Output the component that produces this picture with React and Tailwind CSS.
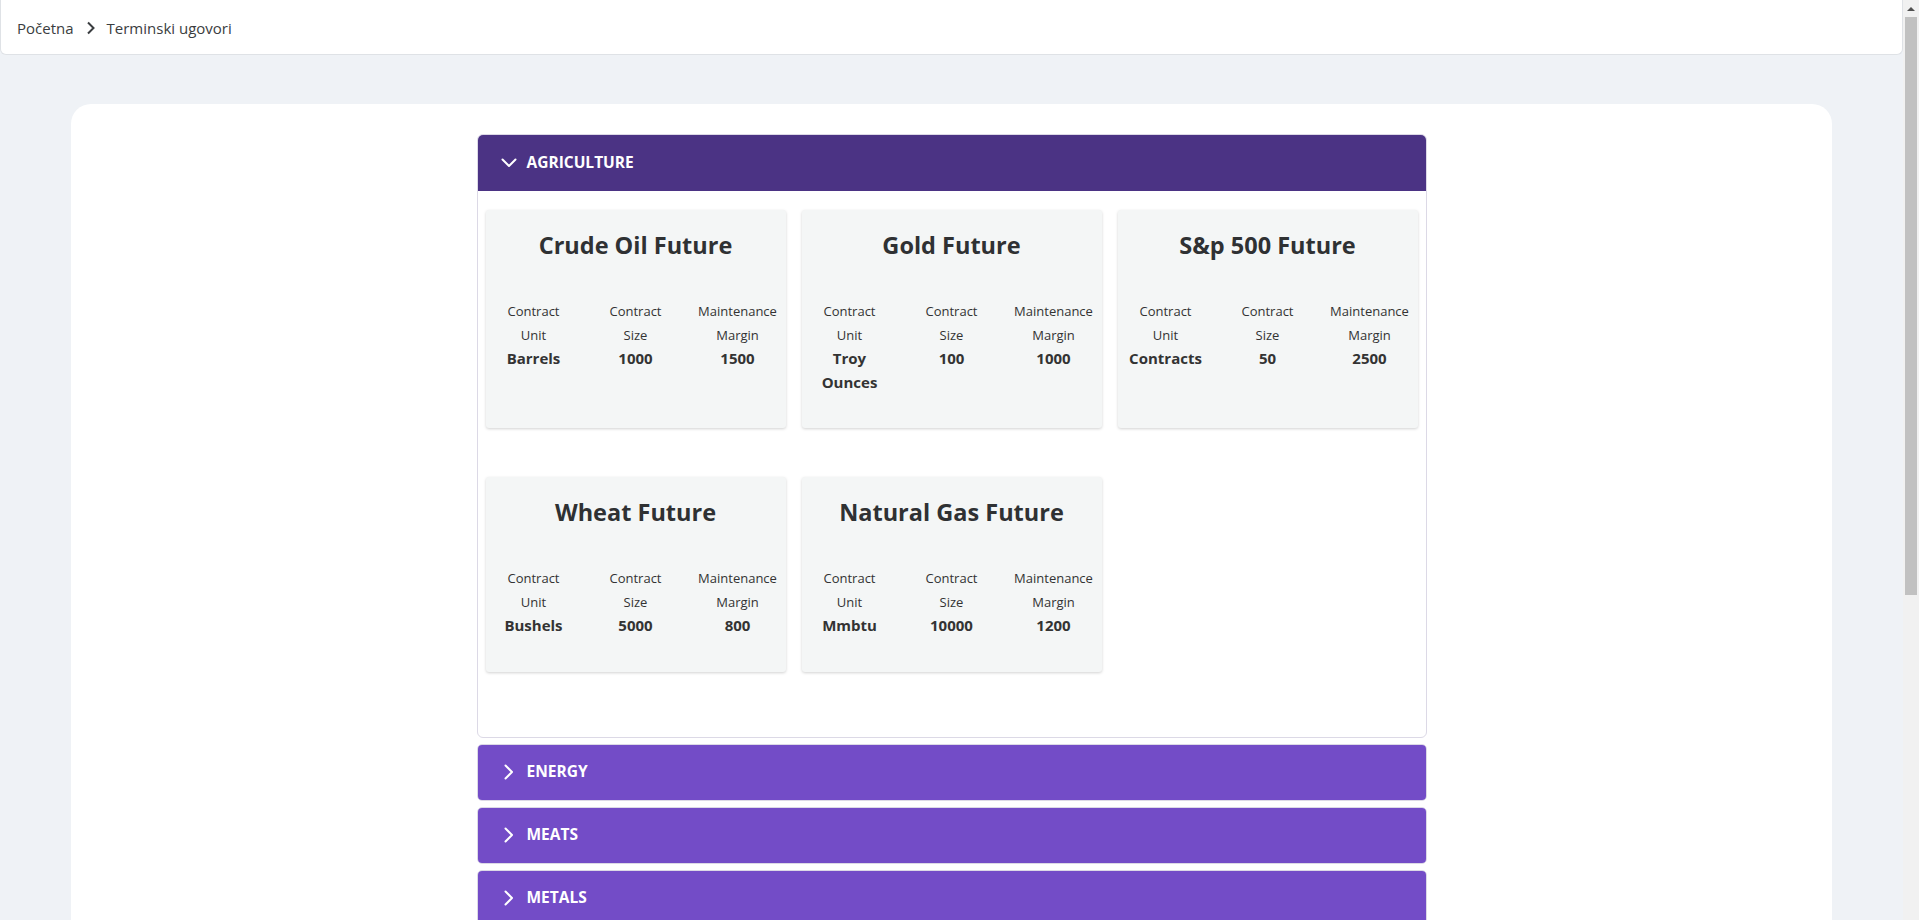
import React, { useState } from "react";

const groups = [
  {
    name: "Agriculture",
    contracts: [
      { title: "Crude Oil Future", unit: "Barrels", size: 1000, margin: 1500 },
      { title: "Gold Future", unit: "Troy Ounces", size: 100, margin: 1000 },
      { title: "S&p 500 Future", unit: "Contracts", size: 50, margin: 2500 },
      { title: "Wheat Future", unit: "Bushels", size: 5000, margin: 800 },
      { title: "Natural Gas Future", unit: "Mmbtu", size: 10000, margin: 1200 },
    ],
  },
  { name: "Energy", contracts: [] },
  { name: "Meats", contracts: [] },
  { name: "Metals", contracts: [] },
];

const Chevron = ({ open }) => (
  <svg
    width="16"
    height="16"
    viewBox="0 0 16 16"
    fill="none"
    stroke="currentColor"
    strokeWidth="2"
    strokeLinecap="round"
    strokeLinejoin="round"
    className={open ? "" : "-rotate-90"}
  >
    <path d="M1.5 4.5 L8 11 L14.5 4.5" />
  </svg>
);

const ContractCard = ({ c }) => (
  <div className="w-[300px] bg-[#f4f6f6] rounded-[3px] shadow-[0_1px_3px_rgba(0,0,0,0.18)] pt-[21px] pb-[34px] text-[#333]">
    <h2 className="text-center text-[23.5px] leading-[29px] font-bold text-[#2f3133]">
      {c.title}
    </h2>
    <div className="mt-[40px] grid grid-cols-[102px_102px_102px] justify-center text-center">
      <div>
        <div className="text-[13px] leading-[23.5px]">Contract</div>
        <div className="text-[13px] leading-[23.5px]">Unit</div>
        <div className="text-[15px] leading-[23.5px] font-bold px-3">{c.unit}</div>
      </div>
      <div>
        <div className="text-[13px] leading-[23.5px]">Contract</div>
        <div className="text-[13px] leading-[23.5px]">Size</div>
        <div className="text-[15px] leading-[23.5px] font-bold">{c.size}</div>
      </div>
      <div>
        <div className="text-[13px] leading-[23.5px]">Maintenance</div>
        <div className="text-[13px] leading-[23.5px]">Margin</div>
        <div className="text-[15px] leading-[23.5px] font-bold">{c.margin}</div>
      </div>
    </div>
  </div>
);

export default function App() {
  const [open, setOpen] = useState("Agriculture");

  return (
    <div className="flex bg-[#eff2f6] font-['Open_Sans','Noto_Sans',sans-serif]">
      <div className="flex-1 min-h-screen pb-[40px]">
        {/* Breadcrumb */}
        <div className="h-[55px] bg-white border-x border-b border-[#dfe2e6] rounded-b-md flex items-center pt-[2px] pl-[16px] text-[15px] text-[#3a3d40]">
          <span>Početna</span>
          <svg
            width="10"
            height="14"
            viewBox="0 0 10 14"
            fill="none"
            stroke="currentColor"
            strokeWidth="2"
            className="ml-[12px] mr-[11px]"
          >
            <path d="M2 1.5 L7.5 7 L2 12.5" />
          </svg>
          <span>Terminski ugovori</span>
        </div>

        <div className="px-[71px] pt-[49px]">
          <div className="bg-white rounded-[20px] pt-[30px] pb-[500px]">
            <div className="w-[950px] mx-auto flex flex-col gap-[6px]">
              {groups.map((g) => {
                const isOpen = open === g.name;
                return (
                  <div
                    key={g.name}
                    className={
                      isOpen
                        ? "border border-[#dcd9e6] rounded-[6px] overflow-hidden"
                        : "border border-[#dcd9e6] rounded-[5px] overflow-hidden"
                    }
                  >
                    <button
                      onClick={() => setOpen(isOpen ? "" : g.name)}
                      className={
                        isOpen
                          ? "w-full h-[56px] flex items-center gap-[10px] pl-[23px] bg-[#4b3384] text-white text-[15.5px] font-bold uppercase"
                          : "w-full h-[55px] flex items-center gap-[10px] pl-[23px] bg-[#734cc7] text-white text-[15.5px] font-bold uppercase"
                      }
                    >
                      <Chevron open={isOpen} />
                      {g.name}
                    </button>
                    {isOpen && (
                      <div className="bg-white px-[8px] pt-[19px] pb-[20px] flex flex-wrap gap-x-[16px] gap-y-[49px] mb-[45px]">
                        {g.contracts.map((c) => (
                          <ContractCard key={c.title} c={c} />
                        ))}
                      </div>
                    )}
                  </div>
                );
              })}
            </div>
          </div>
        </div>
      </div>

      {/* scrollbar */}
      <div className="w-[16px] shrink-0 h-screen sticky top-0 bg-[#f1f1f1] flex flex-col">
        <div className="h-[17px] flex items-center justify-center text-[#505050]">
          <svg width="8" height="6" viewBox="0 0 8 6" fill="currentColor">
            <path d="M0 5 L4 1 L8 5 Z" />
          </svg>
        </div>
        <div className="mx-[2px] h-[578px] bg-[#c1c1c1]" />
      </div>
    </div>
  );
}
